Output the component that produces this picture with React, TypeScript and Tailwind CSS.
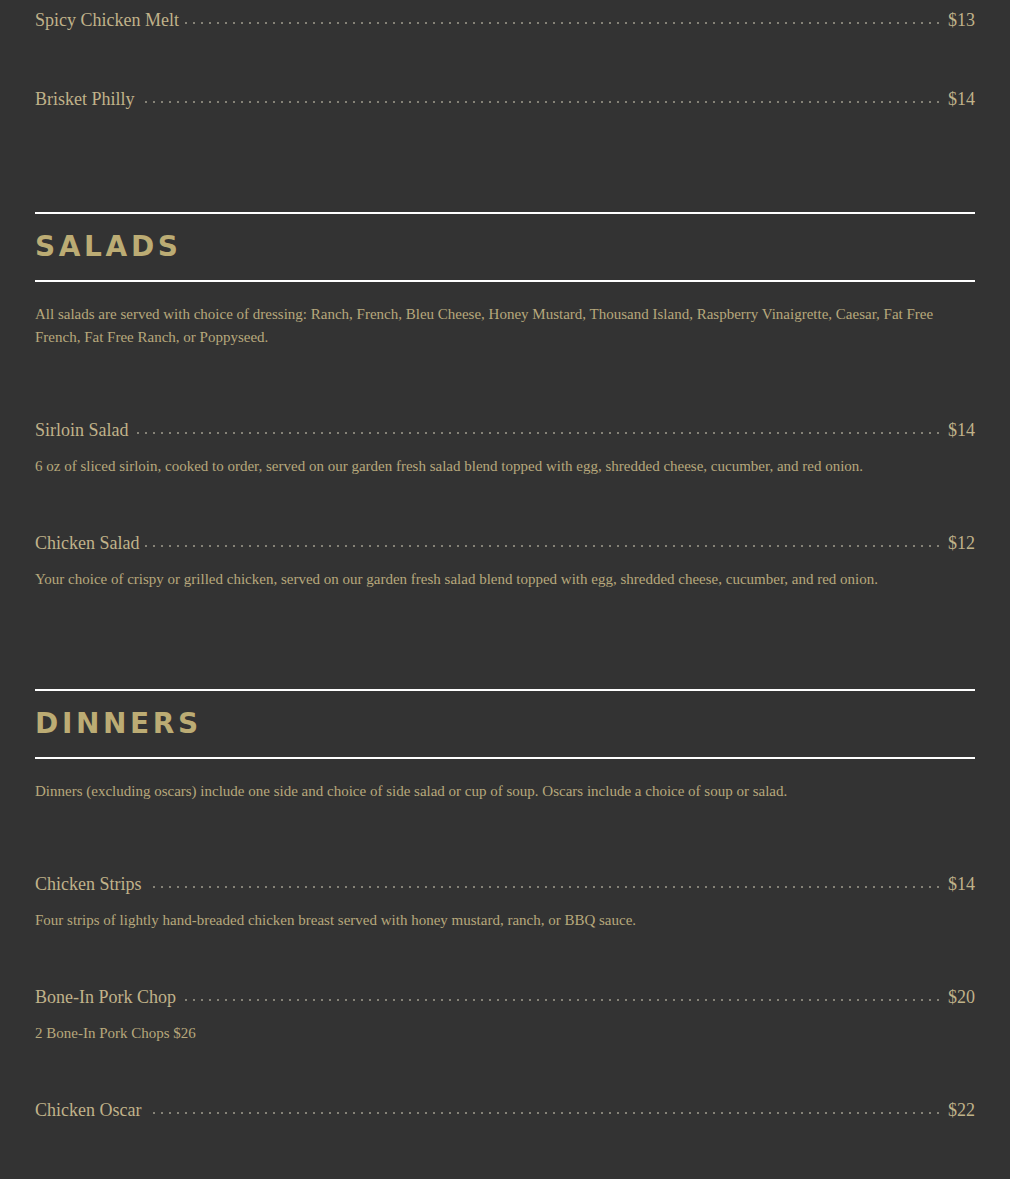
type Item = { name: string; price: string; desc?: string };

const sandwiches: Item[] = [
  { name: "Spicy Chicken Melt", price: "$13" },
  { name: "Brisket Philly", price: "$14" },
];

const salads: Item[] = [
  {
    name: "Sirloin Salad",
    price: "$14",
    desc: "6 oz of sliced sirloin, cooked to order, served on our garden fresh salad blend topped with egg, shredded cheese, cucumber, and red onion.",
  },
  {
    name: "Chicken Salad",
    price: "$12",
    desc: "Your choice of crispy or grilled chicken, served on our garden fresh salad blend topped with egg, shredded cheese, cucumber, and red onion.",
  },
];

const dinners: Item[] = [
  {
    name: "Chicken Strips",
    price: "$14",
    desc: "Four strips of lightly hand-breaded chicken breast served with honey mustard, ranch, or BBQ sauce.",
  },
  { name: "Bone-In Pork Chop", price: "$20", desc: "2 Bone-In Pork Chops $26" },
  { name: "Chicken Oscar", price: "$22" },
];

function MenuItem({ item }: { item: Item }) {
  return (
    <div className="mb-[51px]">
      <div className="flex items-center h-[28px] text-[18px] leading-[28px] text-[#c0b28a]">
        <div className="flex-1 h-[28px] bg-[radial-gradient(circle,#858277_0.8px,transparent_1.1px)] bg-[length:8px_4px] bg-[position:3px_15px] bg-repeat-x">
          <span className="bg-[#333333] pr-[6px]">{item.name}</span>
        </div>
        <span className="pl-[9px]">{item.price}</span>
      </div>
      {item.desc && (
        <p className="mt-[11px] text-[15px] leading-[23px] text-[#b7a87c]">{item.desc}</p>
      )}
    </div>
  );
}

function SectionHead({ title }: { title: string }) {
  return (
    <div className="border-y-2 border-white h-[70px] flex items-center">
      <h2 className="font-['DejaVu_Sans',sans-serif] font-bold text-[28px] tracking-[0.13em] text-[#bcac74] leading-none">
        {title}
      </h2>
    </div>
  );
}

export default function App() {
  return (
    <div className="min-h-screen bg-[#333333] px-[35px] pt-[6px] font-['Liberation_Serif',serif]">
      {sandwiches.map((i) => (
        <MenuItem key={i.name} item={i} />
      ))}
      <div className="h-[48px]" />

      <SectionHead title="SALADS" />
      <p className="mt-[21px] mb-[67px] text-[15px] leading-[23px] text-[#b7a87c] pr-[30px]">
        All salads are served with choice of dressing: Ranch, French, Bleu Cheese, Honey Mustard, Thousand Island,
        Raspberry Vinaigrette, Caesar, Fat Free French, Fat Free Ranch, or Poppyseed.
      </p>
      {salads.map((i) => (
        <MenuItem key={i.name} item={i} />
      ))}
      <div className="h-[47px]" />

      <SectionHead title="DINNERS" />
      <p className="mt-[21px] mb-[67px] text-[15px] leading-[23px] text-[#b7a87c]">
        Dinners (excluding oscars) include one side and choice of side salad or cup of soup. Oscars include a choice of
        soup or salad.
      </p>
      {dinners.map((i) => (
        <MenuItem key={i.name} item={i} />
      ))}
    </div>
  );
}
